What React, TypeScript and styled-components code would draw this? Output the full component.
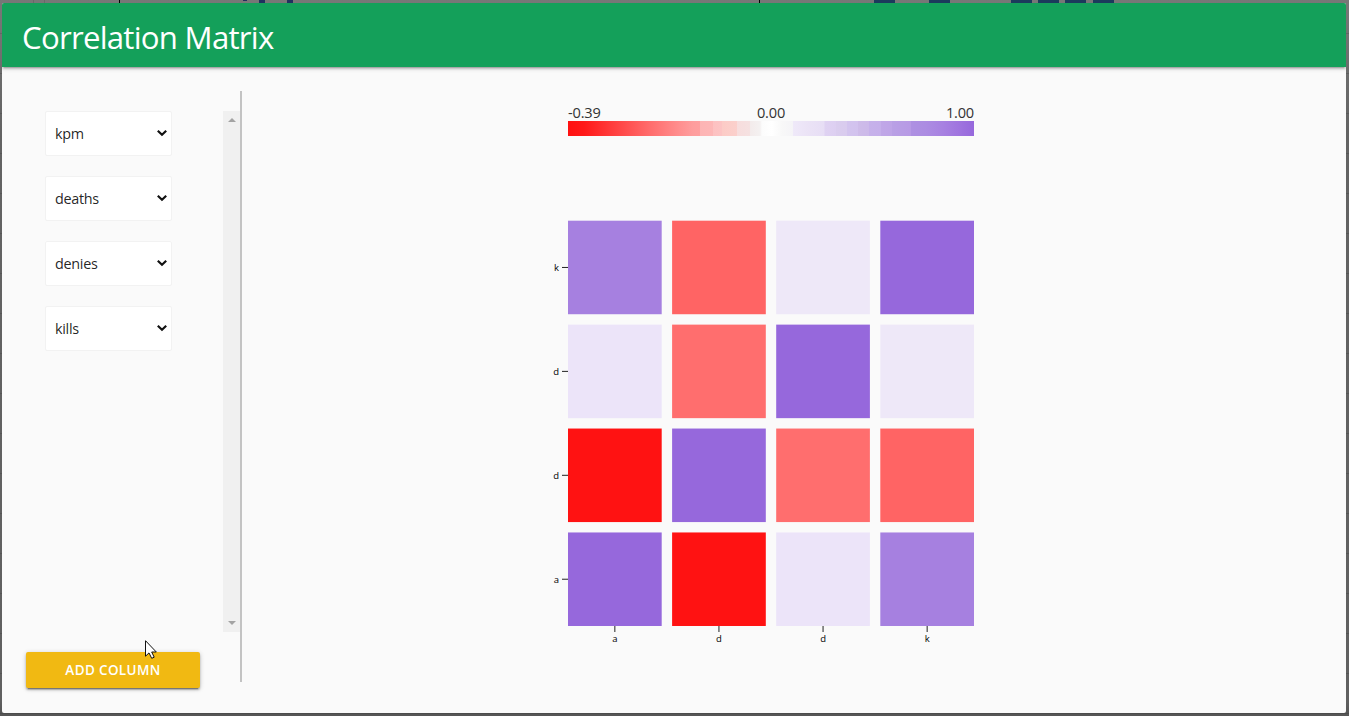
import React from 'react';
import styled, { createGlobalStyle } from 'styled-components';

const sans = "'Open Sans', 'Noto Sans', sans-serif";

const GlobalStyle = createGlobalStyle`
  * { box-sizing: border-box; }
  html, body { margin: 0; padding: 0; }
  body { font-family: ${sans}; overflow: hidden; }
`;

const Backdrop = styled.div`
  position: relative;
  width: 1349px;
  height: 716px;
  padding: 3px 3px 3px 2px;
  background:
    repeating-linear-gradient(transparent 0 33px, rgba(0, 0, 0, 0.12) 33px 34px, transparent 34px 40px),
    linear-gradient(#777 0, #757575 20px, #636363 130px, #606060 700px, #565656 713px);
  overflow: hidden;
`;

const Peek = styled.i<{ $x: number; $w: number; $h?: number; $c?: string }>`
  position: absolute;
  top: 0;
  left: ${(p) => p.$x}px;
  width: ${(p) => p.$w}px;
  height: ${(p) => p.$h ?? 3}px;
  background: ${(p) => p.$c ?? '#1b3a5c'};
`;

const Modal = styled.section`
  position: relative;
  display: flex;
  flex-direction: column;
  height: 710px;
  border-radius: 2px;
  background: #fafafa;
  overflow: hidden;
`;

const Header = styled.header`
  display: flex;
  align-items: center;
  flex: 0 0 64px;
  padding: 0 20px;
  background: #14a05a;
  color: #fff;
  box-shadow: 0 2px 2px 0 rgba(0, 0, 0, 0.14), 0 3px 1px -2px rgba(0, 0, 0, 0.12),
    0 1px 5px 0 rgba(0, 0, 0, 0.2);
`;

const Title = styled.h1`
  margin: 0;
  padding-top: 4px;
  font-size: 31.2px;
  font-weight: 400;
  line-height: 60px;
  letter-spacing: -0.75px;
  white-space: nowrap;
`;

const Body = styled.div`
  display: flex;
  flex: 1;
  padding-top: 24px;
`;

const Sidebar = styled.aside`
  display: flex;
  flex-direction: column;
  width: 240px;
  height: 591px;
  padding-top: 20px;
  border-right: 2px solid #c3c3c3;
`;

const ColumnList = styled.div`
  display: flex;
  justify-content: space-between;
  flex: 0 0 521px;
  padding-left: 43px;
`;

const Selects = styled.div`
  display: flex;
  flex-direction: column;
  gap: 20px;
`;

const Select = styled.div`
  display: flex;
  align-items: center;
  justify-content: space-between;
  width: 127px;
  height: 45px;
  padding: 0 4px 0 9px;
  border: 1px solid #f2f2f2;
  border-radius: 2px;
  background: #fff;
  color: rgba(0, 0, 0, 0.87);
  font-size: 14.4px;
  letter-spacing: -0.3px;

  svg { margin-bottom: 2px; }
`;

const Track = styled.div`
  display: flex;
  flex-direction: column;
  justify-content: space-between;
  align-items: flex-start;
  width: 17px;
  padding: 7px 0 7px 4.5px;
  background: #f0f0f0;
`;

const AddButton = styled.button`
  flex: 0 0 36px;
  width: 174px;
  margin: 20px 0 0 24px;
  padding: 0;
  border: 0;
  border-radius: 2px;
  background: #f1b912;
  color: #fff;
  font: 600 13.5px/36px ${sans};
  letter-spacing: 0.35px;
  box-shadow: 0 2px 2px 0 rgba(0, 0, 0, 0.24), 0 3px 1px -2px rgba(0, 0, 0, 0.3),
    0 1px 5px 0 rgba(0, 0, 0, 0.2);
`;

const Plot = styled.main`
  display: flex;
  flex-direction: column;
  width: 426px;
  margin-left: 306px;
  padding-top: 11px;
`;

const Legend = styled.div`
  width: 406px;
  margin-left: 20px;
`;

const LegendLabels = styled.div`
  display: grid;
  grid-template-columns: 1fr 1fr 1fr;
  height: 19px;
  color: #333;
  font-size: 14.6px;
  line-height: 21px;
  letter-spacing: -0.2px;

  span:nth-child(2) { text-align: center; }
  span:nth-child(3) { text-align: right; }
`;

const Ramp = styled.div`
  height: 15px;
  background: linear-gradient(90deg,
    #ff1111 0, #ff1919 16px, #ff6a6a 80px, #ff8f8f 112px, #fe9d9d 125px, #fe9f9f 132px,
    #fdb4b4 132px, #fdb7b7 145px, #fdc1c1 145px, #fcc4c4 154px, #fccbc6 154px, #fbd0cc 169px,
    #f7dddd 169px, #f5e1e1 182px, #f3ebeb 182px, #f4f1f1 192px, #fcfcfc 194px, #fff 204px,
    #f8f8f8 214px, #f5f4f7 225px, #efe9f9 225px, #ebe3f6 240px, #e7def5 256px, #dfd2f2 257px,
    #ddcff1 268px, #dacdee 268px, #d9cbee 279px, #d3c4ee 279px, #d2c2ee 290px, #cebce9 290px,
    #ccb9e9 301px, #c6b1ea 301px, #c5afea 313px, #c0a7e7 313px, #bea4e7 324px, #b9a0e5 324px,
    #b799e5 343px, #ae90e2 343px, #ac8ce2 358px, #a781e1 375px, #a075df 390px, #9668dc 406px);
`;

const Matrix = styled.svg`
  display: block;
  margin-top: 84px;
  font-family: ${sans};
  font-size: 9.5px;
`;

const Pointer = styled.svg`
  position: absolute;
  left: 143px;
  top: 637px;
`;

const columns = ['kpm', 'deaths', 'denies', 'kills'];
const axis = ['a', 'd', 'd', 'k'];
const cells = [
  ['#a680e0', '#ff6464', '#eee8f8', '#9668dc'],
  ['#ece4f9', '#ff6e6e', '#9668dc', '#eee8f8'],
  ['#ff1212', '#9668dc', '#ff6e6e', '#ff6464'],
  ['#9668dc', '#ff1212', '#ece4f9', '#a680e0'],
];

const STEP_X = 104.1;
const BAND_X = 93.7;
const STEP_Y = 103.92;
const BAND_Y = 93.53;
const LEFT = 20;
const TOP = 0.7;
const BOTTOM = 406;

const Chevron = () => (
  <svg width="10" height="8" viewBox="0 0 10 8" fill="none">
    <path d="M0.8 1.7 5 5.7 9.2 1.7" stroke="#111" strokeWidth="2.2" />
  </svg>
);

export default function App() {
  return (
    <>
      <GlobalStyle />
      <Backdrop>
        <Peek $x={33} $w={1} $c="#696969" />
        <Peek $x={44} $w={1} $c="#696969" />
        <Peek $x={119} $w={1} $c="#000" />
        <Peek $x={243} $w={4} $h={1} $c="#20305f" />
        <Peek $x={259} $w={6} $c="#20305f" />
        <Peek $x={287} $w={6} $c="#20305f" />
        <Peek $x={759} $w={1} $c="#000" />
        {[874, 929, 1011, 1038, 1065, 1093].map((x) => (
          <Peek key={x} $x={x} $w={21} />
        ))}
        <Modal>
          <Header>
            <Title>Correlation Matrix</Title>
          </Header>
          <Body>
            <Sidebar>
              <ColumnList>
                <Selects>
                  {columns.map((name) => (
                    <Select key={name}>
                      {name}
                      <Chevron />
                    </Select>
                  ))}
                </Selects>
                <Track>
                  <svg width="8" height="4"><path d="M0 4 4 0 8 4Z" fill="#a3a3a3" /></svg>
                  <svg width="8" height="4"><path d="M0 0H8L4 4Z" fill="#a3a3a3" /></svg>
                </Track>
              </ColumnList>
              <AddButton>ADD COLUMN</AddButton>
            </Sidebar>
            <Plot>
              <Legend>
                <LegendLabels>
                  <span>-0.39</span>
                  <span>0.00</span>
                  <span>1.00</span>
                </LegendLabels>
                <Ramp />
              </Legend>
              <Matrix width="426" height="430">
                {cells.map((row, r) =>
                  row.map((fill, c) => (
                    <rect
                      key={`${r}-${c}`}
                      x={LEFT + c * STEP_X}
                      y={TOP + r * STEP_Y}
                      width={BAND_X}
                      height={BAND_Y}
                      fill={fill}
                    />
                  )),
                )}
                {axis.map((label, i) => {
                  const x = LEFT + i * STEP_X + BAND_X / 2;
                  const y = TOP + (3 - i) * STEP_Y + BAND_Y / 2;
                  return (
                    <g key={i}>
                      <line x1={x} x2={x} y1={BOTTOM} y2={BOTTOM + 6} stroke="#222" />
                      <text x={x} y={BOTTOM + 16} textAnchor="middle">{label}</text>
                      <line x1={LEFT - 6} x2={LEFT} y1={y} y2={y} stroke="#222" />
                      <text x={LEFT - 9} y={y + 3.5} textAnchor="end">{label}</text>
                    </g>
                  );
                })}
              </Matrix>
            </Plot>
          </Body>
          <Pointer width="14" height="20" viewBox="0 0 14 20">
            <path d="M.5.7V16.2L4 12.9 6.7 18.3 9.2 17.2 6.7 12H11.3Z" fill="#fff" stroke="#111" />
          </Pointer>
        </Modal>
      </Backdrop>
    </>
  );
}
